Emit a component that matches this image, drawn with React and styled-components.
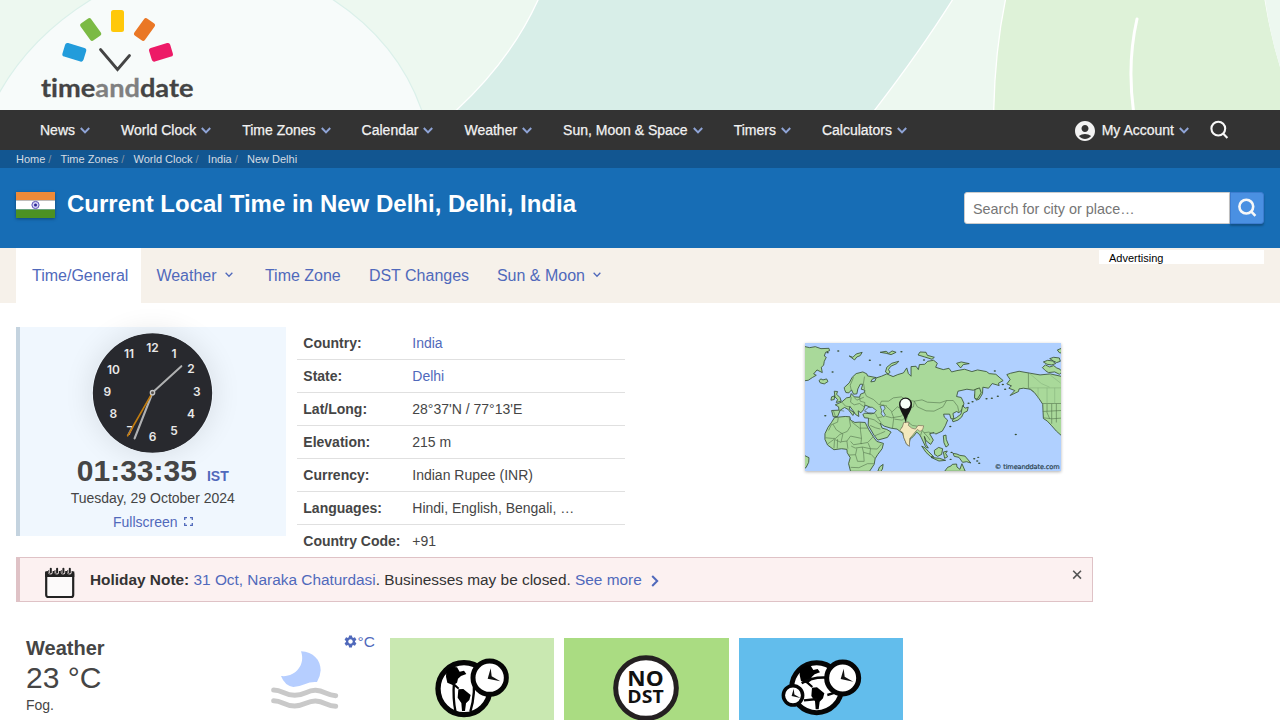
import React from 'react';
import styled, { createGlobalStyle } from 'styled-components';
import { MdAccountCircle, MdSettings } from 'react-icons/md';

const Global = createGlobalStyle`
  * { box-sizing: border-box; }
  html, body { margin: 0; padding: 0; }
  body {
    width: 1280px; height: 720px; overflow: hidden; background: #fff;
    font-family: Helvetica, "Liberation Sans", Arial, sans-serif;
    font-size: 14px; line-height: 20px; color: #454545;
  }
`;

const link = '#5069bb';

const Page = styled.div`height: 720px; overflow: hidden; display: flex; flex-direction: column;`;
const Banner = styled.header`height: 110px; flex: none; background: #edf8f0; svg { display: block; }`;

const Nav = styled.nav`
  height: 40px; flex: none; background: #333; color: #f2f2f2;
  display: flex; align-items: center; padding: 0 51px 0 40px;
`;
const NavItem = styled.a`
  display: flex; align-items: center; gap: 5px; padding-right: 31px; white-space: nowrap;
  -webkit-text-stroke: 0.25px #f2f2f2;
`;
const Account = styled.a`
  display: flex; align-items: center; margin-left: auto; white-space: nowrap;
  -webkit-text-stroke: 0.25px #f2f2f2;
  & > svg:first-child { margin-right: 5px; position: relative; top: 1px; }
  & > svg:last-child { margin-left: 5px; margin-right: 20px; }
`;

const Crumbs = styled.div`
  height: 18px; flex: none; background: #125691; display: flex; padding-left: 16px;
  font-size: 11px; line-height: 19px; color: #d5dce3;
`;
const Crumb = styled.span`
  margin-right: 9.2px;
  i { font-style: normal; color: #8393a1; margin-left: 3px; }
`;

const Hero = styled.div`
  height: 80px; flex: none; background: #176db5; display: flex; align-items: flex-start;
  padding: 24px 16px 0;
`;
const Flag = styled.svg`margin-right: 12px; box-shadow: 0 1px 3px rgba(0,0,0,.35);`;
const Title = styled.h1`
  margin: 0; color: #fff; font-size: 24px; line-height: 24px; font-weight: 700; flex: 1;
`;
const Search = styled.div`display: flex; height: 32px; width: 300px;`;
const Field = styled.div`
  flex: 1; background: #fff; border: 1px solid #ccc; border-radius: 3px 0 0 3px;
  font-size: 14.4px; line-height: 33px; padding-left: 8px; color: #757575;
`;
const SearchButton = styled.div`
  width: 34px; background: #4a90e2; border: 1px solid #3c7ccf; border-radius: 0 3px 3px 0;
  display: flex; align-items: center; justify-content: center;
  box-shadow: 0 2px 2px rgba(0,0,0,.25);
`;

const Tabs = styled.div`
  height: 55px; flex: none; background: #f6f1ea; display: flex; padding: 0 16px;
  font-size: 16px; color: ${link};
`;
const Tab = styled.a`
  width: ${p => p.$w}px; height: 55px; line-height: 55px; padding-left: ${p => (p.$active ? 16 : 15.4)}px;
  background: ${p => (p.$active ? '#fff' : 'transparent')}; white-space: nowrap;
  svg { margin-left: 8px; position: relative; top: -3px; }
`;
const Advert = styled.div`
  margin: 2px 0 0 auto; width: 165px; height: 14px; background: #fff; color: #000;
  font-size: 11px; line-height: 17px; padding-left: 10px;
`;

const Facts = styled.section`display: flex; width: 1077px; margin: 24px 0 0 16px; height: 230px; flex: none;`;
const ClockBox = styled.div`
  width: 269.5px; height: 209px; background: #f0f7fe; border-left: 4px solid #c4d3df;
  display: flex; flex-direction: column; align-items: center; padding-top: 6px;
`;
const Face = styled.svg`
  flex: none; border-radius: 50%; box-shadow: 0 0 30px rgba(0,0,0,.11);
  font-family: Inter, sans-serif; font-weight: 600;
`;
const Time = styled.div`
  font-size: 30px; line-height: 34px; height: 34px; font-weight: 700; margin-top: 1px;
  span { font-size: 14px; line-height: 14px; color: ${link}; margin-left: 10px; }
`;
const DateLine = styled.div`line-height: 20px;`;
const Fullscreen = styled.a`
  color: ${link}; margin-top: 4px; display: flex; gap: 6px;
  svg { margin-top: 5px; }
`;

const Table = styled.div`width: 328px; margin-left: 11.8px;`;
const Row = styled.div`
  height: 33px; border-bottom: 1px solid ${p => (p.$last ? 'transparent' : '#e0e0e0')};
  display: flex; line-height: 33px; padding-left: 6px;
`;
const Label = styled.b`width: 109px; white-space: nowrap;`;
const Value = styled.span`color: ${p => (p.$link ? link : '#454545')};`;
const MapPic = styled.svg`
  margin: 16px 32px 0 auto; display: block; box-shadow: 0 1px 3px rgba(0,0,0,.3); background: #b0d0ff;
`;

const Note = styled.div`
  margin-left: 16px; width: 1077px; height: 45px; flex: none; background: #fcf1f1;
  border: 1px solid #dfc2c6; border-left-width: 4px; display: flex; align-items: flex-start;
  padding: 9px 10px 0 24px; font-size: 15.4px; line-height: 26px; color: #333; white-space: pre;
  a { color: ${link}; }
`;
const NoteText = styled.div`flex: 1; margin-left: 15px; a svg { margin-left: 9px; position: relative; top: 2px; }`;

const Lower = styled.section`display: flex; margin: 36px 0 0 16px; height: 130px; flex: none;`;
const Weather = styled.div`width: 373.8px; display: flex; padding: 0 15px 0 10px;`;
const Report = styled.div`
  width: 244px;
  h2 { margin: 0; font-size: 20px; line-height: 20px; }
  p { margin: 0; }
`;
const Temp = styled.p`font-size: 30px; line-height: 40px; height: 37px;`;
const MoonSlot = styled.div`padding-top: 12px;`;
const Unit = styled.div`
  color: ${link}; font-size: 15.4px; line-height: 8px; display: flex; margin-left: auto;
  svg { position: relative; top: -4.500px; }
`;
const Cards = styled.div`display: flex; gap: 10px;`;
const Card = styled.div`width: 164.5px; background: ${p => p.$bg}; svg { display: block; }`;

const Chevron = ({ w = 10, c = '#8fa4d6', sw = 2 }) => (
  <svg width={w} height={w * 0.7} viewBox="0 0 10 7" fill="none" stroke={c} strokeWidth={sw}>
    <path d="M0.8 1l4.2 4.4L9.2 1" />
  </svg>
);
const Magnifier = ({ sw = 2.3 }) => (
  <svg width="20" height="20" viewBox="0 0 20 20" fill="none" stroke="#f8f8f8" strokeWidth={sw}>
    <circle cx="9.3" cy="8.6" r="6.9" /><path d="M14.1 13.4l4.300 4.500" />
  </svg>
);

const BannerArt = () => (
  <svg width="1280" height="110">
    <path d="M538.5 -1Q511 60 455.500 111H874Q921 50 953 -1Z" fill="#d8eee8" stroke="#fff" strokeWidth="1.3" />
    <path d="M1005.600 -1Q995 50 993.700 111H1281V68Q1271 36 1265 -1Z" fill="#def2d8" stroke="#fff" strokeWidth="1.3" />
    <path d="M1265 -1Q1270 36 1281 70V-1Z" fill="#edf8f0" />
    <path d="M1137 19Q1127 63 1133.500 111" fill="none" stroke="#fff" strokeWidth="3" strokeLinecap="round" />
    <path d="M-2 95Q30 37 92 -1H332Q398 42 422 111H-2Z" fill="#f7fbfa" stroke="#dbf0ea" strokeWidth="1.2" />
    <rect x="-11" y="-7" width="22" height="14" rx="2.500" transform="translate(74.300 52.300) rotate(17)" fill="#229cdb" />
    <rect x="-6.500" y="-10.500" width="13" height="21" rx="2.500" transform="translate(90.700 29.500) rotate(-36)" fill="#7bba44" />
    <rect x="111" y="10" width="13" height="22" rx="2.500" fill="#ffc80a" />
    <rect x="-6.500" y="-10.500" width="13" height="21" rx="2.500" transform="translate(144.500 29.500) rotate(36)" fill="#ea7725" />
    <rect x="-11" y="-7" width="22" height="14" rx="2.500" transform="translate(161 52.300) rotate(-17)" fill="#ed1a67" />
    <path d="M100.500 49.500L117.500 69.500L129.500 55.500" fill="none" stroke="#444" strokeWidth="2.800" strokeLinecap="round" />
    <text x="41" y="97" textLength="152.500" lengthAdjust="spacingAndGlyphs" fontFamily="Lato, sans-serif" fontWeight="700" fontSize="25" fill="#444" stroke="#444" strokeWidth="0.3" style={{ fontVariantLigatures: 'none' }}>
      time<tspan fill="#808080" stroke="#808080">and</tspan>date
    </text>
  </svg>
);

const numerals = [['12', 428, 81], ['1', 493, 99], ['2', 544, 147], ['3', 562, 215], ['4', 544, 282], ['5', 493, 333], ['6', 428, 351], ['7', 360, 333], ['8', 310, 282], ['9', 292, 215], ['10', 310, 150], ['11', 357, 99]];

const ClockFace = () => (
  <Face width="121" height="120" viewBox="247 38 362 362">
    <circle cx="428" cy="219" r="180" fill="#28292e" />
    <g fill="#e8e8e8" fontSize="36" textAnchor="middle">
      {numerals.map(([n, x, y]) => <text key={n} x={x} y={y + 13}>{n}</text>)}
    </g>
    <path d="M434 212L515 138" stroke="#b0b1b2" strokeWidth="6" strokeLinecap="round" />
    <path d="M425 226L374 356" stroke="#b0b1b2" strokeWidth="6.500" strokeLinecap="round" />
    <path d="M430 214L353 348" stroke="#c07c10" strokeWidth="5" strokeLinecap="round" />
    <circle cx="428" cy="218" r="6.500" fill="#55504c" stroke="#c9c9c9" strokeWidth="4" />
  </Face>
);

const WorldMap = () => (
  <MapPic width="256" height="128" viewBox="15 15 768 385">
    <g fill="#a9d99a" stroke="#364f32" strokeWidth="2.500" strokeLinejoin="round">
      <path d="M10 25L28 29L45 26L62 32L86 31L88 38L76 43L72 54L78 58L72 70L70 82L63 88L66 104L50 96L40 108L48 112L36 119L24 127L10 129Z" />
      <path d="M56 128L62 123L68 126L79 123L83 131L72 138L60 135Z" />
      <path d="M102 160L112 161L109 169L119 179L123 190L108 194L112 185L104 177ZM94 177L103 174L102 185L92 187Z" />
      <path d="M147 54L158 58L168 48L186 43L180 53L170 57L163 66L155 60ZM240 43L258 40L266 46L276 39L288 43L273 50L258 46ZM354 51L360 42L378 43L382 52L403 58L396 64L374 57ZM470 76L484 72L498 75L508 77L490 80L482 90Z" />
      <path d="M256 102L260 88L275 76L296 70L290 77L272 85L265 95L270 103L264 108Z" />
      <path d="M133 155L132 149L147 135L156 118L168 107L188 102L200 108L202 114L228 119L216 124L212 132L224 130L228 120L244 115L260 108L279 116L293 110L310 105L320 90L325 107L333 115L333 86L348 85L355 95L358 80L374 79L383 70L401 67L412 76L407 88L430 95L447 91L455 102L471 98L494 94L516 101L533 96L560 101L568 107L588 109L610 128L596 136L598 143L577 137L566 151L549 148L548 167L538 184L529 187L524 173L534 153L520 157L501 154L474 160L470 176L484 179L492 196L489 212L477 225L470 221L459 227L462 243L453 243L449 229L431 229L433 238L443 247L436 264L427 280L407 289L402 284L389 288L400 307L392 320L378 309L373 296L378 320L385 331L377 328L364 300L359 291L350 283L340 296L330 304L326 325L319 318L311 298L308 287L300 281L291 274L272 271L252 265L240 256L246 271L260 275L273 283L262 299L233 307L222 293L204 262L205 241L193 240L188 230L194 226L213 228L223 226L221 214L208 207L195 202L190 216L182 225L174 219L176 236L166 230L159 219L149 206L147 214L162 225L158 233L144 215L133 209L120 217L112 236L99 237L94 218L116 217L115 207L105 201L125 192L139 180L150 178L153 167L162 177L178 178L181 169L193 164L194 157L183 154L188 139L180 139L173 153L170 168L160 169L154 156L146 165L137 164Z" />
      <path d="M103 239L135 236L149 237L151 247L164 254L177 253L195 254L206 276L220 298L230 311L250 317L246 333L233 350L225 363L222 380L208 401L151 401L145 378L150 360L141 345L140 335L124 333L101 336L82 322L74 305L74 288L83 269L93 255Z" />
      <path d="M10 352L26 360L25 374L17 390L10 393ZM233 401L238 388L249 380L247 394L242 401Z" />
      <path d="M621 110L632 106L658 100L686 105L721 111L752 108L788 116V296L770 280L756 264L743 250L731 242L730 222L729 199L717 181L704 164L692 154L671 151L658 153L656 161L631 173L645 158L627 151L635 144L621 138L631 125Z" />
      <path d="M728 89L737 81L750 87L762 83L771 90L781 94L788 102L779 109L765 102L746 104L737 98ZM731 72L744 67L758 69L768 77L756 81L742 79ZM750 62L762 58L779 60L782 70L771 74L761 69ZM773 36L788 30V46L779 44Z" />
      <path d="M488 203L496 211L505 208L502 220L491 225L485 238L474 247L459 252L457 246L470 239L483 229ZM525 155L539 150L544 165L532 184L524 181Z" />
      <path d="M365 325L376 331L386 342L401 357L391 356L378 344ZM403 338L416 329L428 333L425 350L413 356L404 350ZM393 359L419 362L437 368L417 370ZM430 343L442 340L437 347L443 357L434 362ZM430 294L438 292L439 305L446 322L438 328L432 315ZM459 347L471 349L480 353L495 355L513 376L500 372L488 374L477 359L463 356Z" />
      <path d="M434 401L443 389L453 385L457 380L470 379L471 388L480 395L486 378L496 401Z" />
    </g>
    <g fill="#b0d0ff" stroke="#364f32" strokeWidth="2">
      <path d="M193 219L204 209L216 208L229 218L222 226L204 225Z" />
      <path d="M240 205L250 202L255 211L249 220L256 232L250 237L243 228L245 218Z" />
    </g>
    <g fill="none" stroke="#54734d" strokeWidth="1.800">
      <path d="M193 116L190 136L193 154M192 160L199 175L220 185L236 200L260 204M178 178L180 190L194 194L193 207M153 178L151 193L162 201L178 197L192 207M125 193L136 205L151 207M116 217L132 220M99 217L105 235M160 118L150 142L153 156M162 179L170 187L191 178" />
      <path d="M239 201L244 190L265 190L280 180L304 177L318 186L343 190L340 207L323 213L307 215L292 207L276 222L258 205M343 190L366 186L382 193L420 195L440 188L460 188L473 205L477 223M343 190L352 207L378 219L402 220L429 207L440 188M256 235L275 240L304 235L323 215M226 228L232 240L247 237M233 241L243 255M274 222L281 240L277 272M283 244L306 247L322 235L318 253L303 271M322 252L337 263L357 266L365 276L372 285L386 283L403 288M372 285L384 298L390 307M366 279L362 292M207 242L222 246L241 260M210 263L226 270L241 274M224 294L241 287L255 281" />
      <path d="M114 240L112 253L93 261L85 278M98 259L108 276L128 289M147 240L151 265L141 281L119 290L106 302L96 302L76 300M154 252L178 271L202 271M180 253L181 279L184 302M128 289L122 314L103 305L101 332M123 312L140 310L151 295L184 302L182 318L203 314L218 298M140 310L143 333M151 311L160 321L185 317M101 305L83 318M112 304L111 332M153 325L165 331L187 328L211 333L231 334L244 319M146 352L166 351L172 371L192 371L190 344L213 350L225 363M151 389L176 390L202 378L221 378M170 332L166 351M186 328L190 344M204 316L211 333L209 350" />
      <path d="M686 104V151L703 163M728 197H785M729 221L785 218M742 198V221M756 198V258M770 198V254M731 240L756 243L785 241M741 222L750 243" />
      <path d="M686 150H785M715 150V181M742 150V197M765 150V197M690 107L725 137L750 148M750 110L782 135" stroke="#87b37d" />
    </g>
    <g fill="#364f32">
      {[[82, 44], [97, 102], [114, 39], [209, 67], [240, 81], [585, 99], [609, 140], [616, 154], [506, 196], [518, 192], [560, 183], [576, 181], [594, 175], [648, 290], [451, 266], [523, 363], [532, 370], [538, 377], [535, 359], [455, 344], [452, 365], [75, 234], [304, 41], [372, 66]].map(([x, y]) => <ellipse key={`${x}-${y}`} cx={x} cy={y} rx="3.500" ry="2.200" />)}
    </g>
    <path d="M311 254L327 253L325 263L335 271L346 274L354 263L371 264L368 275L360 281L352 275L345 283L338 292L329 302L328 326L319 318L311 299L309 285L299 278L307 267Z" fill="#f3e9bd" stroke="#776d58" strokeWidth="2" />
    <path d="M316 257C315 232 297 220 297 199A19.500 20 0 0 1 336 199C336 220 318 232 316 257Z" fill="#151515" />
    <circle cx="316" cy="198" r="15" fill="#f7fff6" />
    <text x="585" y="395" textLength="195" fontFamily="DejaVu Sans, sans-serif" fontSize="20" fill="#253b48" stroke="#253b48" strokeWidth="0.5">© timeanddate.com</text>
  </MapPic>
);

const CalendarIcon = () => (
  <svg width="31" height="32" viewBox="0 0 31 32">
    <rect x="2.200" y="5" width="27" height="25" rx="2" fill="#fcfafa" stroke="#222" strokeWidth="2.200" />
    <path d="M1.100 4.500H30.300V10H1.100Z" fill="#222" />
    {[6, 12.300, 18.600, 25].map(x => (
      <g key={x}>
        <rect x={x - 1.800} y="0.800" width="4.400" height="6.700" rx="2" fill="#fcf1f1" />
        <path d={`M${x - 1.300} 3V5.500Q${x - 1} 7 ${x + 0.500} 7`} fill="none" stroke="#222" strokeWidth="0.800" />
        <rect x={x - 0.200} y="0.800" width="2" height="5.600" rx="1" fill="#222" />
      </g>
    ))}
  </svg>
);

const FogMoon = () => (
  <svg width="70" height="62" viewBox="810 74 210 186">
    <path d="M903 78C940 80 962 104 962 135Q961 154 951 170Q932 168 914 177Q895 185 880 185Q854 181 843 152C884 157 918 120 903 78Z" fill="#b6ceff" />
    <path d="M821 194C848 194 853 210 884 210S920 194 947 195S980 210 1007 211M821 226C848 226 853 242 884 242S920 226 947 227S980 242 1007 243" fill="none" stroke="#c9c9c9" strokeWidth="15" strokeLinecap="round" />
  </svg>
);

const Americas = () => (
  <>
    <path d="M184 122Q196 108 216 112L224 125L237 122L244 132L228 138L219 146L216 158L210 162L223 174L219 178L203 165L187 158L183 140Z" />
    <path d="M220 178L235 177L257 195L253 210L243 220L240 243H231L229 219L218 203Z" />
  </>
);
const MiniClock = ({ x, y, r, s = 1 }) => (
  <g transform={`translate(${x} ${y})`}>
    <circle r={r} fill="#fff" stroke="#050505" strokeWidth={s * 15} />
    <path d="M3 -28L-6 3L32 11L6 -4Z" transform={`scale(${s})`} fill="#111" />
  </g>
);
const ZoneGlobe = () => (
  <svg width="164.500" height="90" viewBox="15 24 493.500 270">
    <circle cx="237" cy="176" r="78" fill="#fff" stroke="#050505" strokeWidth="16" />
    <Americas />
    <path d="M207 155Q203 205 212 248M264 125Q273 190 256 245" fill="none" stroke="#050505" strokeWidth="7" />
    <MiniClock x={314} y={143} r={50} />
  </svg>
);
const NoDst = () => (
  <svg width="164.500" height="90" viewBox="537 24 493.500 270">
    <circle cx="783" cy="174" r="91" fill="#fff" stroke="#242021" strokeWidth="15" />
    <g fontFamily="Open Sans, sans-serif" fontWeight="700" fill="#111">
      <text x="727" y="169" fontSize="64" textLength="109" lengthAdjust="spacingAndGlyphs">NO</text>
      <text x="727" y="219" fontSize="52" textLength="109" lengthAdjust="spacingAndGlyphs">DST</text>
    </g>
  </svg>
);
const ClockGlobe = () => (
  <svg width="164.500" height="90" viewBox="1060 24 493.500 270">
    <circle cx="1293" cy="173" r="75" fill="#fff" stroke="#050505" strokeWidth="15" />
    <g transform="translate(1059 -5)"><Americas /></g>
    <path d="M1248 160Q1280 140 1325 143M1255 211L1295 207M1325 195Q1346 190 1370 176" fill="none" stroke="#050505" strokeWidth="7" />
    <MiniClock x={1371} y={144} r={48} />
    <MiniClock x={1222} y={196} r={29} s={0.7} />
  </svg>
);

const nav = ['News', 'World Clock', 'Time Zones', 'Calendar', 'Weather', 'Sun, Moon & Space', 'Timers', 'Calculators'];
const crumbs = ['Home', 'Time Zones', 'World Clock', 'India', 'New Delhi'];
const tabs = [['Time/General', 125, 0], ['Weather', 108.5, 1], ['Time Zone', 104, 0], ['DST Changes', 128, 0], ['Sun & Moon', 130, 1]];
const facts = [['Country', 'India', 1], ['State', 'Delhi', 1], ['Lat/Long', "28°37'N / 77°13'E"], ['Elevation', '215 m'], ['Currency', 'Indian Rupee (INR)'], ['Languages', 'Hindi, English, Bengali, …'], ['Country Code', '+91']];

export default function App() {
  return (
    <Page>
      <Global />
      <Banner><BannerArt /></Banner>
      <Nav>
        {nav.map(n => <NavItem key={n}>{n}<Chevron /></NavItem>)}
        <Account><MdAccountCircle size={24} />My Account<Chevron /></Account>
        <Magnifier sw={2.1} />
      </Nav>
      <Crumbs>
        {crumbs.map((c, i) => <Crumb key={c}>{c}{i < 4 && <i>/</i>}</Crumb>)}
      </Crumbs>
      <Hero>
        <Flag width="39" height="26" viewBox="0 0 39 26">
          <path d="M0 0H39V8.500H0Z" fill="#ee8a38" /><path d="M0 8.500H39V17.500H0Z" fill="#fff" /><path d="M0 17.500H39V26H0Z" fill="#4c9122" />
          <circle cx="19.500" cy="13" r="3.600" fill="#d4d2f3" stroke="#5b55b8" strokeWidth="1" /><circle cx="19.500" cy="13" r="1.500" fill="#2b2699" />
        </Flag>
        <Title>Current Local Time in New Delhi, Delhi, India</Title>
        <Search><Field>Search for city or place…</Field><SearchButton><Magnifier sw={2.600} /></SearchButton></Search>
      </Hero>
      <Tabs>
        {tabs.map(([t, w, c], i) => (
          <Tab key={t} $w={w} $active={i === 0}>{t}{c ? <Chevron w={8} c={link} sw={1.6} /> : null}</Tab>
        ))}
        <Advert>Advertising</Advert>
      </Tabs>
      <Facts>
        <ClockBox>
          <ClockFace />
          <Time>01:33:35<span>IST</span></Time>
          <DateLine>Tuesday, 29 October 2024</DateLine>
          <Fullscreen>Fullscreen
            <svg width="9" height="9" viewBox="0 0 9 9" fill="none" stroke={link} strokeWidth="1.300"><path d="M.7 3V.7H3M6 .7H8.300V3M8.300 6V8.300H6M3 8.300H.7V6" /></svg>
          </Fullscreen>
        </ClockBox>
        <Table>
          {facts.map(([k, v, l], i) => <Row key={k} $last={i === 6}><Label>{k}:</Label><Value $link={l}>{v}</Value></Row>)}
        </Table>
        <WorldMap />
      </Facts>
      <Note>
        <CalendarIcon />
        <NoteText><b>Holiday Note:</b> <a>31 Oct, Naraka Chaturdasi</a>. Businesses may be closed. <a>See more<svg width="8" height="12" viewBox="0 0 8 12" fill="none" stroke={link} strokeWidth="2"><path d="M1.200 1L6.200 6L1.200 11" /></svg></a></NoteText>
        <svg width="10" height="15" viewBox="0 0 10 15" stroke="#555" strokeWidth="1.600"><path d="M1.200 3.800L9 11.600M9 3.800L1.200 11.600" /></svg>
      </Note>
      <Lower>
        <Weather>
          <Report><h2>Weather</h2><Temp>23 °C</Temp><p>Fog.</p></Report>
          <MoonSlot><FogMoon /></MoonSlot>
          <Unit><MdSettings size={15} />°C</Unit>
        </Weather>
        <Cards>
          <Card $bg="#c9e8b1"><ZoneGlobe /></Card>
          <Card $bg="#aadc82"><NoDst /></Card>
          <Card $bg="#62bdec"><ClockGlobe /></Card>
        </Cards>
      </Lower>
    </Page>
  );
}
